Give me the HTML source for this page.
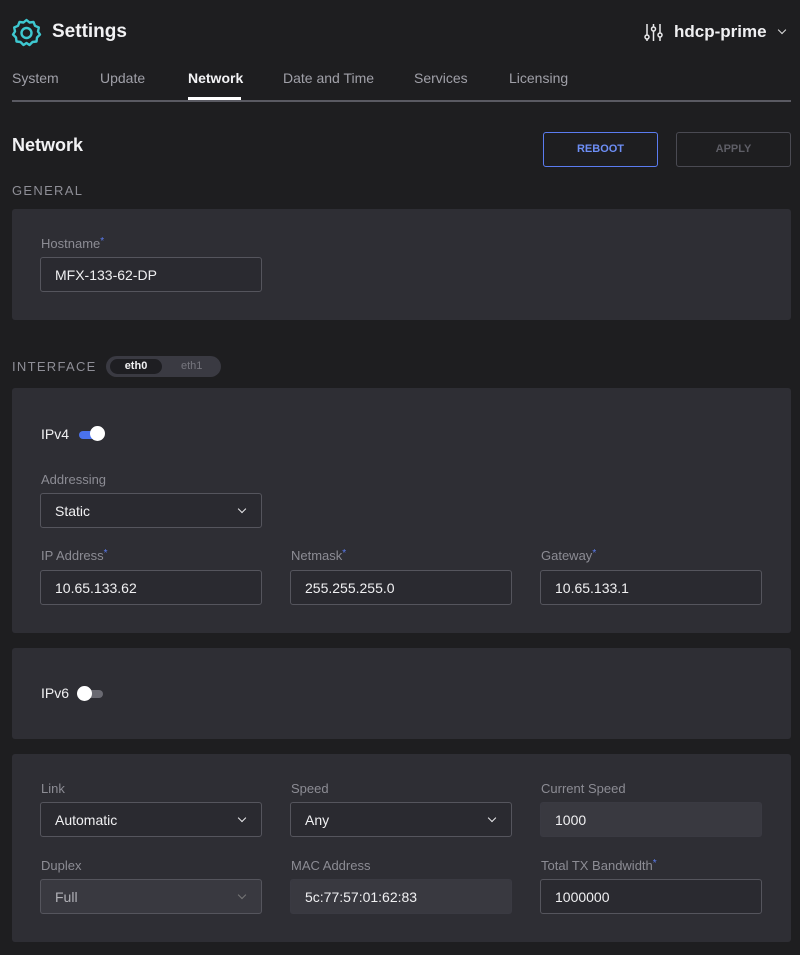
<!DOCTYPE html>
<html><head><meta charset="utf-8"><style>
*{box-sizing:border-box;margin:0;padding:0}
body{width:800px;height:955px;background:#1e1e20;font-family:"Liberation Sans",sans-serif;color:#e8e8ea;position:relative;overflow:hidden}
.a{position:absolute}
.card{position:absolute;left:12px;width:779px;background:#2e2e34;border-radius:3px}
.lbl{position:absolute;font-size:13px;color:#8c8c94}
.lbl b{color:#5b7cf0;font-weight:normal;font-size:10px;vertical-align:top}
.in{position:absolute;width:222px;height:35px;border:1px solid #55555d;border-radius:3px;font-size:14px;color:#f0f0f2;padding:9px 0 0 14px;background:#2a2a30}
.ro{border-color:#3a3a42;background:#393940}
.chev{position:absolute;right:16px;top:12px;width:6px;height:6px;border-right:1.8px solid #e8e8ea;border-bottom:1.8px solid #e8e8ea;transform:rotate(45deg)}
.tab{position:absolute;top:70px;font-size:14px;color:#a0a0a8}
.sec{position:absolute;left:12px;font-size:13px;letter-spacing:1.3px;color:#8e8e96}
</style></head><body>
<svg class="a" style="left:11px;top:17px" width="31" height="31" viewBox="0 0 31 31"><path d="M15.5 3 L18.5 5.5 L22.5 5 L24 8.8 L27.8 10.5 L27 14.5 L29 17.5 L26 20.5 L25.5 24.5 L21.5 25 L18.5 28 L15.5 26 L12.5 28 L9.5 25 L5.5 24.5 L5 20.5 L2 17.5 L4 14.5 L3.2 10.5 L7 8.8 L8.5 5 L12.5 5.5 Z" fill="none" stroke="#3ec8d0" stroke-width="2.4" stroke-linejoin="round"/><circle cx="15.5" cy="16" r="5" fill="none" stroke="#3ec8d0" stroke-width="2.4"/></svg>
<div class="a" style="left:52px;top:21px;font-size:19px;font-weight:bold;color:#f2f2f4">Settings</div>
<svg class="a" style="left:644px;top:23px" width="19" height="19" viewBox="0 0 19 19" fill="none" stroke="#e8e8ea" stroke-width="1.5"><path d="M3 1v11M3 16v2M9.5 1v3M9.5 8v10M16 1v9M16 14v4"/><circle cx="3" cy="14" r="2"/><circle cx="9.5" cy="6" r="2"/><circle cx="16" cy="12" r="2"/></svg>
<div class="a" style="left:674px;top:22px;font-size:17px;font-weight:bold;color:#f0f0f2">hdcp-prime</div>
<div class="a" style="left:779px;top:27px;width:6px;height:6px;border-right:1.8px solid #ddd;border-bottom:1.8px solid #ddd;transform:rotate(45deg)"></div>
<div class="tab" style="left:12px">System</div>
<div class="tab" style="left:100px">Update</div>
<div class="tab" style="left:188px;color:#f4f4f6;font-weight:bold">Network</div>
<div class="tab" style="left:283px">Date and Time</div>
<div class="tab" style="left:414px">Services</div>
<div class="tab" style="left:509px">Licensing</div>
<div class="a" style="left:12px;top:100px;width:779px;height:2px;background:#5a5a62"></div>
<div class="a" style="left:188px;top:97px;width:53px;height:3px;background:#fff"></div>
<div class="a" style="left:12px;top:135px;font-size:18px;font-weight:bold;color:#f2f2f4">Network</div>
<div class="a" style="left:543px;top:132px;width:115px;height:35px;border:1px solid #5b7cf0;border-radius:3px;color:#6d8ef5;font-size:11px;font-weight:bold;text-align:center;line-height:33px">REBOOT</div>
<div class="a" style="left:676px;top:132px;width:115px;height:35px;border:1px solid #4a4a52;border-radius:3px;color:#5e5e66;font-size:11px;font-weight:bold;text-align:center;line-height:33px">APPLY</div>
<div class="sec" style="top:183px">GENERAL</div>
<div class="card" style="top:209px;height:111px">
<div class="lbl" style="left:29px;top:27px">Hostname<b>*</b></div>
<div class="in" style="left:28px;top:48px">MFX-133-62-DP</div>
</div>
<div class="sec" style="top:359px">INTERFACE</div>
<div class="a" style="left:106px;top:356px;width:115px;height:21px;border-radius:11px;background:#3a3a42"></div>
<div class="a" style="left:110px;top:359px;width:52px;height:15px;border-radius:8px;background:#1e1e22;font-size:11px;font-weight:bold;color:#f0f0f2;text-align:center;line-height:15px">eth0</div>
<div class="a" style="left:181px;top:359px;font-size:11px;color:#76767e;line-height:15px">eth1</div>
<div class="card" style="top:388px;height:245px">
<div class="a" style="left:29px;top:38px;font-size:14px;color:#f0f0f2">IPv4</div>
<div class="a" style="left:67px;top:43px;width:24px;height:8px;border-radius:4px;background:#4a72ee"></div>
<div class="a" style="left:78px;top:38px;width:15px;height:15px;border-radius:50%;background:#fff"></div>
<div class="lbl" style="left:29px;top:84px">Addressing</div>
<div class="in" style="left:28px;top:105px">Static<span class="chev"></span></div>
<div class="lbl" style="left:29px;top:160px">IP Address<b>*</b></div>
<div class="in" style="left:28px;top:182px">10.65.133.62</div>
<div class="lbl" style="left:279px;top:160px">Netmask<b>*</b></div>
<div class="in" style="left:278px;top:182px">255.255.255.0</div>
<div class="lbl" style="left:529px;top:160px">Gateway<b>*</b></div>
<div class="in" style="left:528px;top:182px">10.65.133.1</div>
</div>
<div class="card" style="top:648px;height:91px">
<div class="a" style="left:29px;top:37px;font-size:14px;color:#f0f0f2">IPv6</div>
<div class="a" style="left:67px;top:42px;width:24px;height:8px;border-radius:4px;background:#6a6a72"></div>
<div class="a" style="left:65px;top:38px;width:15px;height:15px;border-radius:50%;background:#fff"></div>
</div>
<div class="card" style="top:754px;height:188px">
<div class="lbl" style="left:29px;top:27px">Link</div>
<div class="in" style="left:28px;top:48px">Automatic<span class="chev"></span></div>
<div class="lbl" style="left:279px;top:27px">Speed</div>
<div class="in" style="left:278px;top:48px">Any<span class="chev"></span></div>
<div class="lbl" style="left:529px;top:27px">Current Speed</div>
<div class="in ro" style="left:528px;top:48px">1000</div>
<div class="lbl" style="left:29px;top:104px">Duplex</div>
<div class="in ro" style="left:28px;top:125px;color:#b0b0b6;border-color:#55555d">Full<span class="chev" style="border-color:#777"></span></div>
<div class="lbl" style="left:279px;top:104px">MAC Address</div>
<div class="in ro" style="left:278px;top:125px">5c:77:57:01:62:83</div>
<div class="lbl" style="left:529px;top:104px">Total TX Bandwidth<b>*</b></div>
<div class="in" style="left:528px;top:125px">1000000</div>
</div>
</body></html>
